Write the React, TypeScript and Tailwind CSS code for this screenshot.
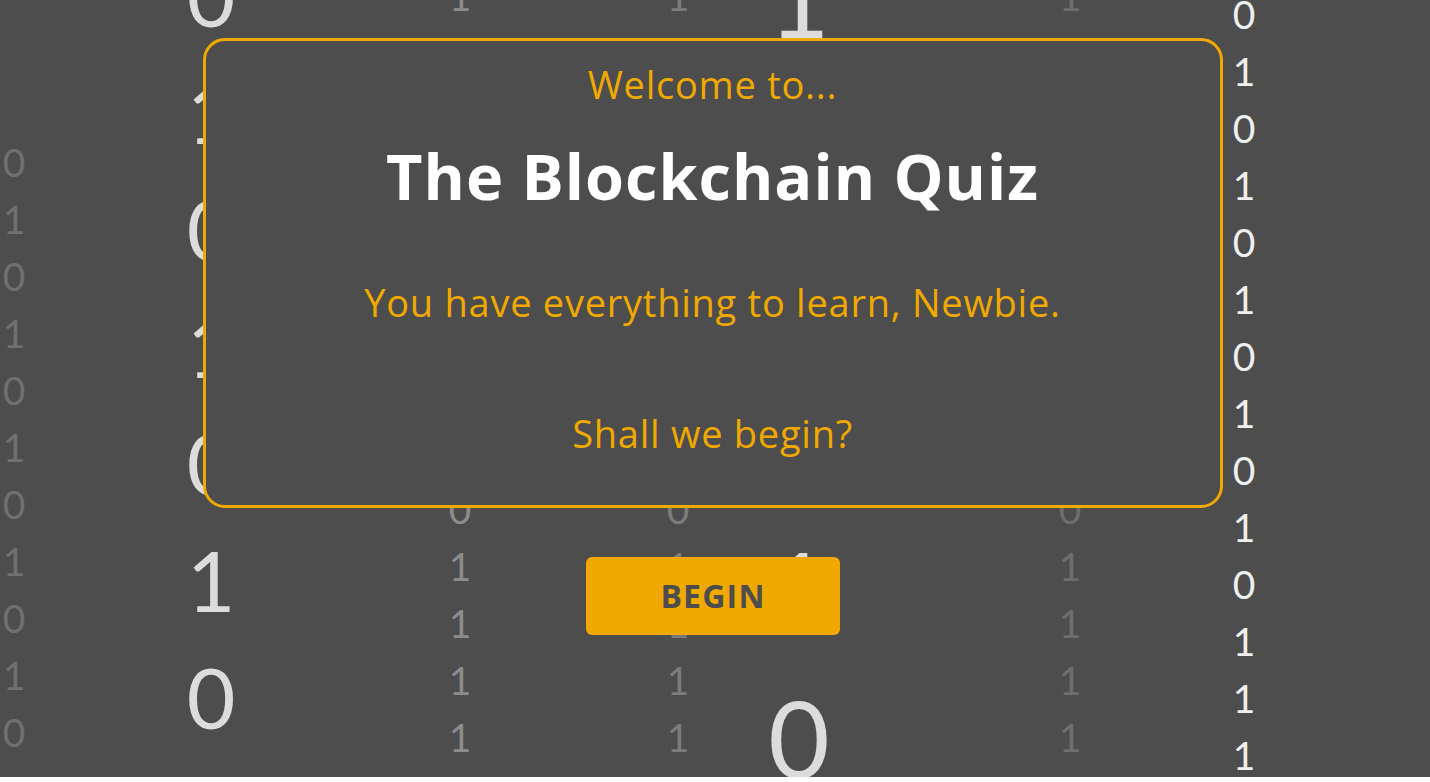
import React from "react";

const cols = [
  { cls: "left-[14px] top-[133.5px] text-[39px] leading-[57px] text-[#707070]", d: "01010101010" },
  { cls: "left-[211px] top-[-64px] text-[84px] leading-[117px] text-[#dcdcdc]", d: "0101010" },
  { cls: "left-[460px] top-[-32.5px] text-[39px] leading-[57px] text-[#8c8c8c]", d: "10101010101111" },
  { cls: "left-[678px] top-[-32.5px] text-[39px] leading-[57px] text-[#7c7c7c]", d: "10101010101111" },
  { cls: "left-[799px] top-[-77px] text-[106px] leading-[148px] text-[#dcdcdc]", d: "101010" },
  { cls: "left-[1070px] top-[-32.5px] text-[39px] leading-[57px] text-[#6e6e6e]", d: "10101010101111" },
  { cls: "left-[1244px] top-[-14.5px] text-[39px] leading-[57px] text-[#efefef]", d: "01010101010111" },
];

export default function App() {
  return (
    <div className="relative w-full h-[777px] overflow-hidden bg-[#4d4d4d] font-['Open_Sans',sans-serif]">
      {cols.map((c, i) => (
        <div
          key={i}
          className={`absolute -translate-x-1/2 flex flex-col items-center font-['Lato',sans-serif] ${c.cls}`}
        >
          {c.d.split("").map((ch, j) => (
            <span key={j}>{ch}</span>
          ))}
        </div>
      ))}
      <div className="relative z-10 flex w-[1425px] flex-col items-center pt-[38px]">
        <div className="flex h-[470px] w-[1020px] flex-col items-center rounded-[22px] border-[3px] border-[#f0a900] bg-[#4d4d4d] text-center">
          <p className="mt-[17px] text-[38px] leading-[52px] tracking-[0.75px] text-[#f0a900]">Welcome to...</p>
          <h1 className="mt-[25px] text-[63px] font-bold leading-[82px] tracking-[1px] text-white">
            The Blockchain Quiz
          </h1>
          <p className="mt-[59px] text-[38px] leading-[52px] tracking-[0.75px] text-[#f0a900]">
            You have everything to learn, Newbie.
          </p>
          <p className="mt-[79px] text-[38px] leading-[52px] tracking-[0.75px] text-[#f0a900]">Shall we begin?</p>
        </div>
        <button className="mt-[49px] h-[78px] w-[254px] rounded-[6px] bg-[#f0a900] pl-[1px] text-[32px] font-bold leading-none tracking-[1.2px] text-[#4d4d4d]">
          BEGIN
        </button>
      </div>
    </div>
  );
}
